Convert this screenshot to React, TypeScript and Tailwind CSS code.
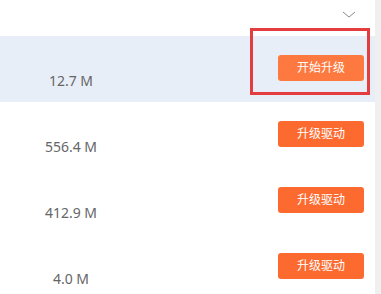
const rows = [
  { size: "12.7 M", label: "开始升级", active: true },
  { size: "556.4 M", label: "升级驱动", active: false },
  { size: "412.9 M", label: "升级驱动", active: false },
  { size: "4.0 M", label: "升级驱动", active: false },
];

const App = () => {
  return (
    <div
      className="relative flex h-[294px] w-[381px] overflow-hidden bg-white"
      style={{ fontFamily: '"Noto Sans", "Noto Sans CJK SC", sans-serif' }}
    >
      <div className="flex w-[375px] flex-col">
        {/* Header with collapse chevron */}
        <div className="flex h-[36px] shrink-0 justify-end pr-[19px] pt-[10px]">
          <svg width="14" height="9" viewBox="0 0 14 9" fill="none">
            <path d="M1 2 L7 7 L13 2" stroke="#8a8a8a" strokeWidth="1" />
          </svg>
        </div>

        {rows.map((row) => (
          <div
            key={row.size}
            className={`flex h-[66px] shrink-0 justify-between ${row.active ? "bg-[#e8eef8]" : ""}`}
          >
            <div className="w-[142px] pt-[35px] text-center text-[14px] leading-[20px] text-[#666666]">
              {row.size}
            </div>
            <div className="pr-[11px] pt-[18px]">
              <button
                className={`h-[26px] w-[86px] rounded-[3px] text-[12px] text-white ${row.active ? "bg-[#fd7940]" : "bg-[#fd6a30]"}`}
              >
                {row.label}
              </button>
            </div>
          </div>
        ))}
      </div>

      {/* Scrollbar track */}
      <div className="w-[6px] shrink-0 bg-[#f0f0f0]" />

      {/* Annotation box */}
      <div className="absolute left-[250px] top-[28px] h-[67px] w-[120px] border-[3px] border-[#e43d40]" />
    </div>
  );
};

export default App;
